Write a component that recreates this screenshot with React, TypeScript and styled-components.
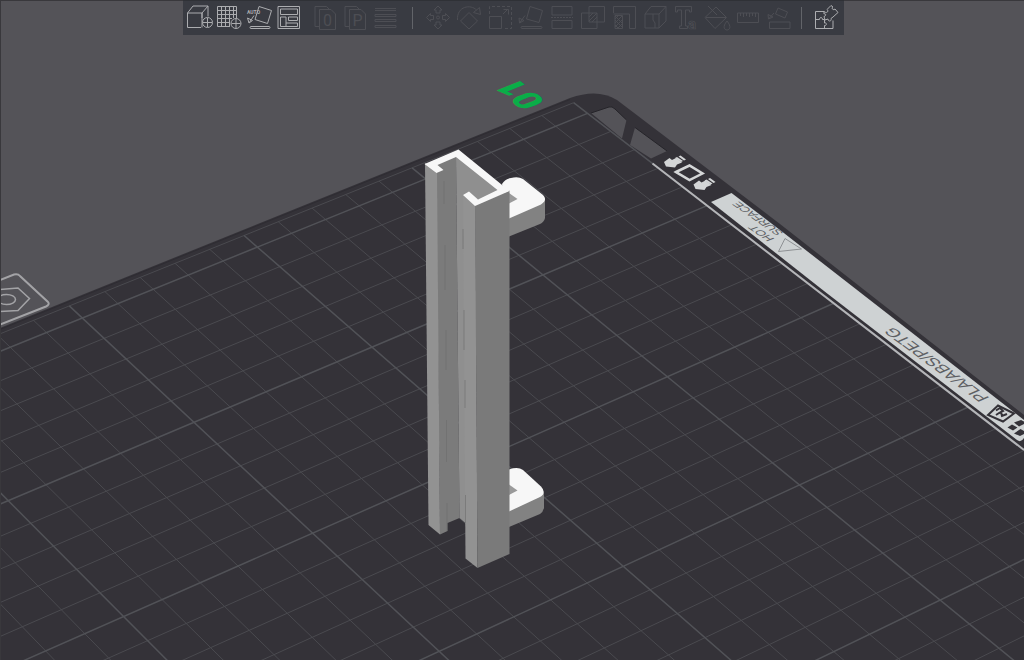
import React from "react";
import styled, { createGlobalStyle } from "styled-components";

const GlobalStyle = createGlobalStyle`
  body { margin: 0; background: #545358; }
`;

const Viewport = styled.main`
  display: grid;
  grid-template: minmax(0, 1fr) / minmax(0, 1fr);
  height: 100vh;
  overflow: hidden;
  font-family: "Liberation Sans", sans-serif;
`;

const Scene = styled.svg`
  grid-area: 1 / 1;
  width: 100%;
  height: 100%;
  display: block;
`;

const ToolbarArea = styled.header`
  grid-area: 1 / 1;
  z-index: 1;
  align-self: start;
  display: flex;
  justify-content: center;
  padding-left: 3px;
`;

const Toolbar = styled.div`
  display: flex;
  align-items: center;
  padding: 0 3px 0 1px;
  border-top: 1px solid #2f3136;
  background: #393b42;
`;

const ToolGroup = styled.div<{ $gap?: number; $before?: number }>`
  display: flex;
  gap: ${(p) => p.$gap ?? 0}px;
  margin-left: ${(p) => p.$before ?? 0}px;
`;

const Divider = styled.span<{ $before: number; $after: number }>`
  width: 1px;
  height: 22px;
  margin: 0 ${(p) => p.$after}px 0 ${(p) => p.$before}px;
  background: #626469;
`;

const ToolButton = styled.button`
  width: 30px;
  height: 34px;
  padding: 4px 3px 6px;
  border: 0;
  background: transparent;
  color: #acadb0;
  &:disabled { color: #4d4e54; }
`;

const Glyph = styled.svg`
  display: block;
  width: 24px;
  height: 24px;
  overflow: visible;
  fill: none;
  stroke: currentColor;
  stroke-width: 1;
  font-family: Roboto, "Liberation Sans", sans-serif;
`;

type Tool = { label: string; art: React.ReactNode };

const addTools: Tool[] = [
  {
    label: "Add",
    art: (
      <>
        <path d="M15 13V8H0.5V22.5H14M0.5 8L6 1H21L15 8M21 1V11.5M15 8V22.5" />
        <circle cx="20.5" cy="17.5" r="5" />
        <path d="M20.5 13V22M16 17.5H25" />
      </>
    ),
  },
  {
    label: "Add plate",
    art: (
      <>
        <path d="M13 21.5H0.5V1.5H19.5V13M4.5 1.5V21.5M8.5 1.5V21.5M12.5 1.5V21.5M16.5 1.5V13M0.5 5.5H19.5M0.5 9.5H19.5M0.5 13.5H15M0.5 17.5H13" />
        <circle cx="19" cy="18.5" r="5" />
        <path d="M19 14V23M14.5 18.5H23.5" />
      </>
    ),
  },
  {
    label: "Auto orient",
    art: (
      <>
        <path d="M12 1.5L24.5 5.5L20.5 18.5L8 14.5Z" />
        <path d="M7 10.5L2 18L0.5 13L5.5 15.5L2 18" />
        <rect x="3" y="21.5" width="20" height="2" rx="1" />
        <text x="0" y="9" fontSize="5" fontWeight="700" fill="currentColor" stroke="none">AUTO</text>
      </>
    ),
  },
  {
    label: "Arrange",
    art: (
      <path d="M1 1.500H22.500V23.500H1ZM3.500 4H20.500V9.500H3.500ZM3.500 12H9V21.500H3.500ZM11.500 12H20.500V15.500H11.500ZM9 18H20.500V21.500H9" />
    ),
  },
];

const page = (
  <path d="M6.500 4.500H18L22.500 9V24.500H6.500ZM6.500 21.500H2V1.500H13.500L16.500 4.500" />
);

const objectTools: Tool[] = [
  {
    label: "Split to objects",
    art: (
      <>
        {page}
        <text x="14.500" y="21" fontSize="16" textAnchor="middle" fill="currentColor" stroke="none">0</text>
      </>
    ),
  },
  {
    label: "Split to parts",
    art: (
      <>
        {page}
        <text x="14.500" y="21" fontSize="16" textAnchor="middle" fill="currentColor" stroke="none">P</text>
      </>
    ),
  },
  {
    label: "Variable layer height",
    art: (
      <path d="M2 3.500H23M2 5.500H23M2 9.500H23V11.500H2ZM2 14.500H23V16.500H2ZM2 20.500H23V22.500H2Z" />
    ),
  },
];

const editTools: Tool[] = [
  {
    label: "Move",
    art: (
      <>
        <circle cx="12" cy="12.500" r="1.500" />
        <path d="M12 1L16 5H14V8H10V5H8ZM12 24L16 20H14V17H10V20H8ZM0.500 12.500L4.500 8.500V10.500H7.500V14.500H4.500V16.500ZM23.500 12.500L19.500 8.500V10.500H16.500V14.500H19.500V16.500Z" />
      </>
    ),
  },
  {
    label: "Rotate",
    art: <path d="M12 7.500L20.500 16L12 24L3.500 16ZM0.500 15C-0.500 1 14 -1 19.500 5M16.500 7.500L23.500 9.500L22.500 2.500Z" />,
  },
  {
    label: "Scale",
    art: (
      <>
        <path d="M1.500 11.500H13.500V23.500H1.500Z" />
        <path d="M1.500 9V1.500H23.500V23.500H16" strokeDasharray="3 2" />
        <path d="M15 9L19 5M15.500 4.500H20.500V9.500" />
      </>
    ),
  },
  {
    label: "Lay on face",
    art: (
      <>
        <path d="M11 1.500L23.500 5.500L20 17.500L7.500 14ZM6 10.500L0.500 18L0 13L5 15.500L0.500 18" />
        <rect x="2" y="21.500" width="21" height="2" rx="1" />
      </>
    ),
  },
  {
    label: "Cut",
    art: (
      <>
        <path d="M2 10V1.500H22V10ZM2 15.500H22V23.500H2Z" />
        <path d="M1 12.500H23" strokeDasharray="2 1" />
      </>
    ),
  },
  {
    label: "Mesh boolean",
    art: (
      <>
        <path d="M8 1.500H23.500V17H8ZM0.500 8H16V23.500H0.500Z" />
        <path d="M8 12L12 8M8 16L16 8M11 17L16 12" />
      </>
    ),
  },
  {
    label: "Support painting",
    art: (
      <>
        <path d="M1.500 8V1.500H23.500V23.500H17.500V9H1.500M3 10.500H10.500V23.500H3Z" />
        <path d="M3 14L6 11M3 18L10 11M3 22L10 15M6 23L10 19M3 20L6 23M3 15L10 22M3 11L10 18" />
      </>
    ),
  },
  {
    label: "Seam painting",
    art: <path d="M2 9H16V23H2ZM2 9L8 1.500H23L16 9M23 1.500V16L16 23M10 9V15L12 18V23" />,
  },
  {
    label: "Text shape",
    art: (
      <>
        <path d="M1.500 1.500H17.500V7H15.500V5H11.500V21H13.500V23.500H5.500V21H7.500V5H3.500V7H1.500Z" />
        <text x="14" y="24" fontSize="15" fontWeight="700" strokeWidth="0.700">a</text>
      </>
    ),
  },
  {
    label: "Color painting",
    art: (
      <>
        <path d="M11 2L21.500 12.500L10 23.500L0 12.500ZM1 12.500H21M3 1L12 10" />
        <path d="M22 16C27 22 24.500 25 22 25S17 22 22 16Z" />
      </>
    ),
  },
  {
    label: "Measure",
    art: <path d="M1.500 8H22.500V17.500H1.500ZM4.500 8V11M7.500 8V12M10.500 8V11M13.500 8V12M16.500 8V11M19.500 8V12" />,
  },
  {
    label: "Assemble",
    art: <path d="M2.500 17H23V23.500H2.500ZM11 3L20.500 7L18 13L8.500 9ZM7 8L1.500 14L1 9.500L6 12L1.500 14" />,
  },
];

const assemblyTool: Tool = {
  label: "Assembly view",
  art: (
    <path d="M10 6.500H1.500V23.500H19V15.500M1.500 14.500H5.500C5 12 9 12 8.500 14.500H10.500V18C13 17 13 21 10.500 20.500V23.500M10 6.500V9C12 8 12.500 11 10 11.500L11 15L14 14C14 17 18 16.500 17 13.500L19 12L24 7.500L21 4C19 6 17 3 19 2L17 0.500L13 4.500C15.500 6 12.500 9 10 6.500" />
  ),
};

function ToolButtons({ tools, disabled }: { tools: Tool[]; disabled?: boolean }) {
  return (
    <>
      {tools.map((t) => (
        <ToolButton key={t.label} type="button" aria-label={t.label} disabled={disabled}>
          <Glyph viewBox="0 0 24 24" aria-hidden="true">{t.art}</Glyph>
        </ToolButton>
      ))}
    </>
  );
}

type Point = [number, number];

/* Perspective map that takes the unit square onto a screen quadrilateral. */
function squareToQuad([p0, p1, p2, p3]: Point[]) {
  const dx1 = p1[0] - p2[0];
  const dx2 = p3[0] - p2[0];
  const dx3 = p0[0] - p1[0] + p2[0] - p3[0];
  const dy1 = p1[1] - p2[1];
  const dy2 = p3[1] - p2[1];
  const dy3 = p0[1] - p1[1] + p2[1] - p3[1];
  const den = dx1 * dy2 - dx2 * dy1;
  const g = (dx3 * dy2 - dx2 * dy3) / den;
  const h = (dx1 * dy3 - dx3 * dy1) / den;
  const a = p1[0] - p0[0] + g * p1[0];
  const b = p3[0] - p0[0] + h * p3[0];
  const d = p1[1] - p0[1] + g * p1[1];
  const e = p3[1] - p0[1] + h * p3[1];
  return (u: number, v: number): Point => {
    const w = g * u + h * v + 1;
    return [(a * u + b * v + p0[0]) / w, (d * u + e * v + p0[1]) / w];
  };
}

/* The quad spans major columns 1 to 4 and major rows 0 to 3; one unit is 50 mm. */
const unitToScreen = squareToQuad([
  [82.3, 318],
  [587.5, 113.4],
  [968.3, 407],
  [439.2, 651.3],
]);
const bed = (column: number, row: number) => unitToScreen((column - 1) / 3, row / 3);

const BED_EDGE = -0.12;

function gridPath(major: boolean) {
  const parts: string[] = [];
  const line = (a: Point, b: Point) =>
    parts.push(`M${a[0].toFixed(1)} ${a[1].toFixed(1)}L${b[0].toFixed(1)} ${b[1].toFixed(1)}`);
  for (let i = -7; i <= 20; i++) {
    if ((i % 5 === 0) === major) line(bed(i / 5, BED_EDGE), bed(i / 5, 5));
  }
  for (let j = 0; j <= 25; j++) {
    if ((j % 5 === 0) === major) line(bed(-1.4, j / 5), bed(4, j / 5));
  }
  if (!major) line(bed(-1.4, BED_EDGE), bed(4, BED_EDGE));
  return parts.join("");
}

function Plate() {
  return (
    <g>
      <path d="M0 328L570 98Q598 88 617 100L780 224L1024 415V660H0Z" fill="#343238" />
      <path d="M0 329.500L570 99.500" stroke="#2e2c32" fill="none" />
      <path d={gridPath(false)} stroke="#4a4a4f" fill="none" />
      <path d={gridPath(true)} stroke="#515257" strokeWidth="1.500" fill="none" />
      <path d="M591 113L609 107Q612 106 615 109L626.500 120L622 138.500Z" fill="#545358" />
      <path d="M635 127.500L667 151L651 158.500L630 145Z" fill="#545358" />
      <path d="M591 113L609 107Q612 106 615 109L626.500 120M635 127.500L667 151" stroke="#252429" fill="none" />
    </g>
  );
}

function InsertArrow() {
  return (
    <>
      <path d="M664 162L669.500 158L672 160L676 158L682 162.500L677 164.500L675 167.500L666 166.500Z" />
      <path d="M675 158L677 157L683 161L681 162ZM678.500 156.500L680.500 155.500L686 159.500L684 160.500Z" />
    </>
  );
}

function Strip() {
  return (
    <g>
      <path d="M711 202L731.500 193L780 230L1024 420V438Q1021 443 1017 440L824 291Z" fill="#ced2d3" />
      <path d="M652.500 163.500L1024 450" stroke="#b4b5b8" strokeWidth="2" fill="none" />
      <g fill="#d4d6d7">
        <InsertArrow />
        <g transform="translate(29.500 22.500)"><InsertArrow /></g>
      </g>
      <path d="M676 172L689.500 165.500L702.500 173.500L689.500 180Z" stroke="#d4d6d7" strokeWidth="2.500" fill="none" />
      <g fill="#5d5f63">
        <text fontSize="8" transform="matrix(-1.200 -0.840 1.300 -0.500 784 233)">SURFACE</text>
        <text fontSize="8" transform="matrix(-1.200 -0.840 1.300 -0.500 775 239)">HOT</text>
        <text fontSize="12" transform="matrix(-1.130 -0.830 1.250 -0.550 990 398)">PLA/ABS/PETG</text>
      </g>
      <path d="M785 238.500L801.500 249L778.500 251.500Z" stroke="#8e9194" fill="none" />
      <path d="M988 415L998 405.500L1014 413.500L1003 421.500Z" stroke="#343238" strokeWidth="2" fill="none" />
      <path d="M996 410.500L1000 408L1003 411L999 413L996 415M1001 412L1002 416L1007 414" stroke="#343238" strokeWidth="2" fill="none" />
      <path d="M1007.500 427.500L1012 424.500L1017.500 427.500L1013 430.500ZM1014 422.500L1021 420L1024 421.500V424L1019 426.500ZM1014 433.500L1020.500 429L1024 431V434L1020 436Z" fill="#343238" />
    </g>
  );
}

function Clips() {
  return (
    <g>
      <path d="M509 218L545 200V218Q544 222 540 224L509 236.500Z" fill="#828282" />
      <path d="M502 184Q505 179 511 178Q518 176 523 179L543 195Q548 200 541 204.500L509 218.500Z" fill="#f7f7f7" />
      <path d="M509 193L517.500 199L509 203.500Z" fill="#9a9a9a" />
      <path d="M509 510L544 493V508Q543 512 540 514L509 527Z" fill="#828282" />
      <path d="M509 469.500Q518 466.500 523 470L541 486.500Q547 493 540 497L509 511.500Z" fill="#f7f7f7" />
      <path d="M509 484.500L517.500 490.500L509 495Z" fill="#9a9a9a" />
    </g>
  );
}

function Rail() {
  return (
    <g>
      <path d="M436 165L456 156L459.500 518L447.500 523V531L440 534.500Z" fill="#7b7b7b" />
      <path d="M456 156L500 190L480 200L466 198V523.500L459.500 518Z" fill="#8f8f8f" />
      <path d="M425 163L437 172L440 534.500L428.500 525Z" fill="#929292" />
      <path d="M463 194L475.500 205L477.500 568L465.500 558.500Z" fill="#929292" />
      <path d="M475 205L509.500 190.500V554L477.500 568Z" fill="#7a7a7a" />
      <path
        d="M444 181V204M445 245V290M446 330V370M446.500 420V462M447 503V531M463 229V249M464 310V350M465 380V408M465.500 495V523"
        stroke="#6c6c6c"
        strokeOpacity="0.600"
        fill="none"
      />
      <path
        d="M424.500 164L458.500 149.500L509.500 191L475 206L463 195L469 191.500L478 199.500L497.500 190L456 157L437.500 165L443.500 170L436.500 173Z"
        fill="#f7f7f7"
      />
    </g>
  );
}

function Emblem() {
  return (
    <g stroke="#a3a3a6" fill="none">
      <path d="M0 280L14 274.500Q18 273.500 20 276L48 302Q50 304.500 46 306.500L0 324.500" strokeWidth="2" />
      <path d="M0 289.500L18 288L29.500 298.500L18 310.500L0 311.500" strokeWidth="1.500" />
      <ellipse cx="6.500" cy="299.500" rx="9" ry="5" strokeWidth="1.500" />
    </g>
  );
}

export default function App() {
  return (
    <>
      <GlobalStyle />
      <Viewport>
        <ToolbarArea>
          <Toolbar role="toolbar" aria-label="Model tools">
            <ToolGroup><ToolButtons tools={addTools} /></ToolGroup>
            <ToolGroup $before={6}><ToolButtons tools={objectTools} disabled /></ToolGroup>
            <Divider $before={12} $after={10} />
            <ToolGroup $gap={1}><ToolButtons tools={editTools} disabled /></ToolGroup>
            <Divider $before={7} $after={9} />
            <ToolGroup><ToolButtons tools={[assemblyTool]} /></ToolGroup>
          </Toolbar>
        </ToolbarArea>
        <Scene viewBox="0 0 1024 660" preserveAspectRatio="xMidYMid slice" role="img" aria-label="Build plate with model">
          <rect width="1024" height="660" fill="#545358" />
          <Emblem />
          <Plate />
          <Strip />
          <text
            fontFamily="Roboto, sans-serif"
            fontSize="20"
            fontWeight="900"
            fill="#0aad48"
            transform="matrix(-1.360 -1.060 1.640 -0.650 547 102)"
          >
            01
          </text>
          <Clips />
          <Rail />
          <path d="M0.500 0V660M0 0.500H1024" stroke="#39383c" fill="none" />
        </Scene>
      </Viewport>
    </>
  );
}
